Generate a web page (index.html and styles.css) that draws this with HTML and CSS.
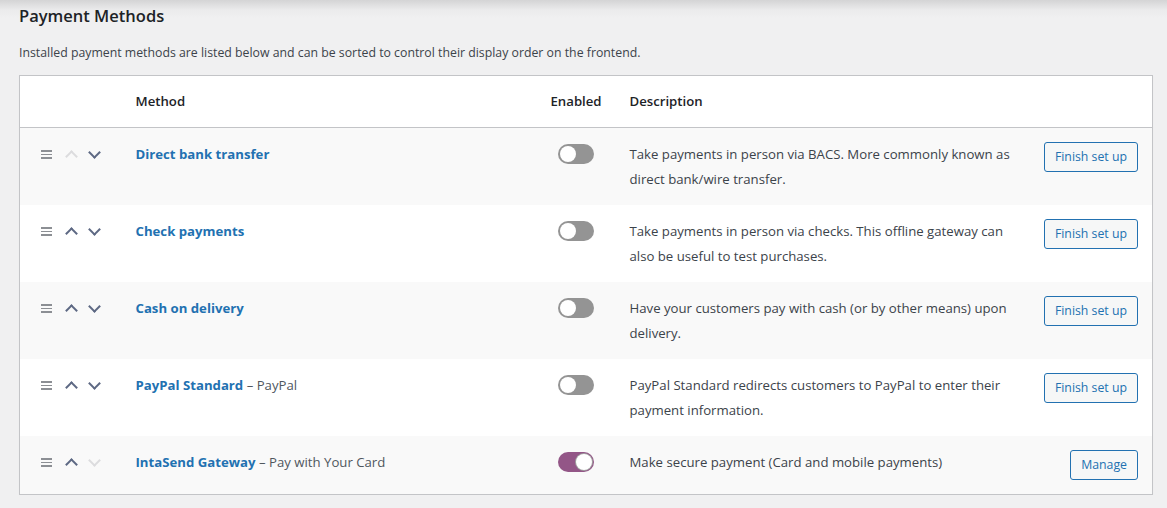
FILE: index.html
```html
<!DOCTYPE html>
<html lang="en">
<head>
  <meta charset="UTF-8" />
  <title>Payment Methods</title>
  <link rel="stylesheet" href="styles.css">
</head>
<body>
  <div class="wrap">
    <h2 class="page-title">Payment Methods</h2>
    <p class="intro">Installed payment methods are listed below and can be sorted to control their display order on the frontend.</p>

    <table class="gateways">
      <colgroup>
        <col class="col-sort">
        <col class="col-name">
        <col class="col-status">
        <col class="col-desc">
        <col class="col-action">
      </colgroup>
      <thead>
        <tr>
          <th></th>
          <th>Method</th>
          <th class="status">Enabled</th>
          <th>Description</th>
          <th></th>
        </tr>
      </thead>
      <tbody>
        <!-- Direct bank transfer -->
        <tr>
          <td>
            <div class="sort">
              <span class="handle"><i></i><i></i><i></i></span>
              <span class="move up off"></span>
              <span class="move down"></span>
            </div>
          </td>
          <td class="name"><a href="#">Direct bank transfer</a></td>
          <td class="status"><span class="toggle"></span></td>
          <td class="desc">Take payments in person via BACS. More commonly known as direct bank/wire transfer.</td>
          <td class="action"><a class="button" href="#">Finish set up</a></td>
        </tr>
        <!-- Check payments -->
        <tr>
          <td>
            <div class="sort">
              <span class="handle"><i></i><i></i><i></i></span>
              <span class="move up"></span>
              <span class="move down"></span>
            </div>
          </td>
          <td class="name"><a href="#">Check payments</a></td>
          <td class="status"><span class="toggle"></span></td>
          <td class="desc">Take payments in person via checks. This offline gateway can also be useful to test purchases.</td>
          <td class="action"><a class="button" href="#">Finish set up</a></td>
        </tr>
        <!-- Cash on delivery -->
        <tr>
          <td>
            <div class="sort">
              <span class="handle"><i></i><i></i><i></i></span>
              <span class="move up"></span>
              <span class="move down"></span>
            </div>
          </td>
          <td class="name"><a href="#">Cash on delivery</a></td>
          <td class="status"><span class="toggle"></span></td>
          <td class="desc">Have your customers pay with cash (or by other means) upon delivery.</td>
          <td class="action"><a class="button" href="#">Finish set up</a></td>
        </tr>
        <!-- PayPal -->
        <tr>
          <td>
            <div class="sort">
              <span class="handle"><i></i><i></i><i></i></span>
              <span class="move up"></span>
              <span class="move down"></span>
            </div>
          </td>
          <td class="name"><a href="#">PayPal Standard</a> &ndash; PayPal</td>
          <td class="status"><span class="toggle"></span></td>
          <td class="desc">PayPal Standard redirects customers to PayPal to enter their payment information.</td>
          <td class="action"><a class="button" href="#">Finish set up</a></td>
        </tr>
        <!-- IntaSend -->
        <tr class="last">
          <td>
            <div class="sort">
              <span class="handle"><i></i><i></i><i></i></span>
              <span class="move up"></span>
              <span class="move down off"></span>
            </div>
          </td>
          <td class="name"><a href="#">IntaSend Gateway</a> &ndash; Pay with Your Card</td>
          <td class="status"><span class="toggle on"></span></td>
          <td class="desc">Make secure payment (Card and mobile payments)</td>
          <td class="action"><a class="button" href="#">Manage</a></td>
        </tr>
      </tbody>
    </table>
  </div>
</body>
</html>
```

FILE: styles.css
```css
body {
  margin: 0;
  font-family: 'Open Sans', 'Noto Sans', sans-serif;
  font-size: 13px;
  color: #3c434a;
  background: #f0f0f1 linear-gradient(#d4d4d5, #ebebec 10px, #f0f0f1 18px) no-repeat;
  background-size: 100% 18px;
}

.wrap {
  padding: 0 14px 0 19px;
}

.page-title {
  margin: 0;
  padding-top: 5px;
  font-size: 16.5px;
  font-weight: 600;
  line-height: 22px;
  color: #1d2327;
}

.intro {
  margin: 0;
  padding: 16px 0 12px;
  font-size: 12.3px;
  line-height: 20px;
}

.gateways {
  width: 1134px;
  border-collapse: collapse;
  table-layout: fixed;
  background: #fff;
  border: 1px solid #c3c4c7;
  box-shadow: 0 1px 1px rgba(0, 0, 0, 0.04);
}

.col-sort { width: 101px; }
.col-name { width: 415px; }
.col-status { width: 79px; }
.col-desc { width: 414px; }

.gateways th,
.gateways td {
  padding: 14px 15px 13px;
  text-align: left;
  vertical-align: top;
  font-size: 13.2px;
  line-height: 25px;
}

.gateways th {
  padding-top: 13px;
  padding-bottom: 13px;
  font-weight: 600;
  color: #1d2327;
  border-bottom: 1px solid #c3c4c7;
}

.gateways tbody tr:nth-child(odd) {
  background: #f9f9f9;
}

.gateways .last td {
  padding-bottom: 14px;
}

.gateways .status {
  text-align: center;
}

.gateways td.status {
  padding-left: 16px;
  padding-right: 14px;
}

.sort {
  display: flex;
  height: 25px;
  align-items: center;
}

.handle {
  width: 24px;
  display: flex;
  flex-direction: column;
  align-items: center;
  gap: 2px;
}

.handle i {
  display: block;
  width: 11px;
  height: 1.4px;
  background: #8c8f94;
}

.move {
  width: 24px;
  height: 25px;
  position: relative;
}

.move::after {
  content: "";
  position: absolute;
  left: 8px;
  width: 7px;
  height: 7px;
  border: solid #5d6883;
  border-width: 2px 2px 0 0;
}

.move.up::after {
  top: 10px;
  transform: rotate(-45deg);
}

.move.down::after {
  top: 6px;
  transform: rotate(135deg);
}

.move.off::after {
  border-color: #dcdcde;
}

.name {
  color: #50575e;
}

.name a {
  color: #2271b1;
  font-weight: 700;
  text-decoration: none;
}

.toggle {
  display: inline-block;
  width: 36px;
  height: 20px;
  margin-top: 2px;
  border-radius: 10px;
  background: #949494;
  position: relative;
  vertical-align: top;
}

.toggle::after {
  content: "";
  position: absolute;
  top: 2px;
  left: 2px;
  width: 16px;
  height: 16px;
  border-radius: 50%;
  background: #fff;
}

.toggle.on {
  background: #935687;
}

.toggle.on::after {
  left: auto;
  right: 2px;
  box-shadow: 0 0 0 1px #a0a0a0;
}

.desc {
  color: #3c434a;
}

.action {
  text-align: right !important;
  padding-right: 14px !important;
}

.button {
  display: inline-block;
  padding: 0 10px;
  min-height: 28px;
  line-height: 28px;
  font-size: 12.3px;
  color: #2271b1;
  background: #f6f7f7;
  border: 1px solid #2271b1;
  border-radius: 3px;
  text-decoration: none;
}
```
